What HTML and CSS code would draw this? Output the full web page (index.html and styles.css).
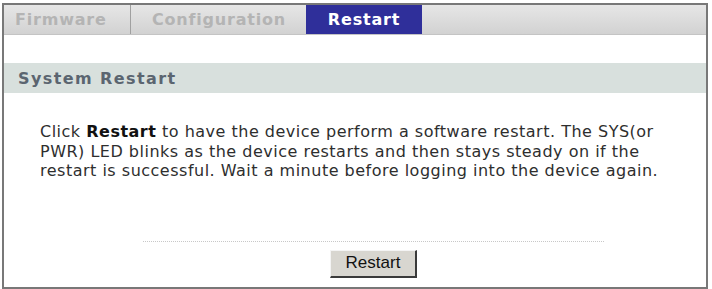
FILE: index.html
```html
<!DOCTYPE html>
<html>
<head>
<meta charset="utf-8">
<link rel="stylesheet" href="styles.css">
</head>
<body>
<div class="frame">
  <div class="tabs">
    <div class="tab tab-fw">Firmware</div>
    <div class="tab tab-cfg">Configuration</div>
    <div class="tab tab-active">Restart</div>
    <div class="tab-fill"></div>
  </div>
  <div class="title">System Restart</div>
  <p class="desc">Click <b>Restart</b> to have the device perform a software restart. The SYS(or PWR) LED blinks as the device restarts and then stays steady on if the restart is successful. Wait a minute before logging into the device again.</p>
  <div class="sep"></div>
  <div class="actions"><button class="btn">Restart</button></div>
</div>
</body>
</html>
```

FILE: styles.css
```css
html, body {
  margin: 0;
  padding: 0;
  background: #ffffff;
}
.frame {
  margin: 3px 0 0 2px;
  width: 702px;
  height: 282px;
  border: 2px solid #787878;
  background: #fff;
  display: flex;
  flex-direction: column;
  font-family: "DejaVu Sans", Verdana, sans-serif;
}
.tabs {
  display: flex;
  height: 29px;
  background: linear-gradient(#e6e6e6, #d2d2d2);
  border-bottom: 1px solid #c4c4c4;
}
.tab {
  display: flex;
  align-items: center;
  font-weight: bold;
  font-size: 16px;
  color: #b4b4b4;
  letter-spacing: 0.8px;
}
.tab-fw {
  width: 115px;
  padding-left: 11px;
  border-right: 1px solid #a0a0a0;
}
.tab-cfg {
  width: 154px;
  padding-left: 21px;
}
.tab-active {
  width: 116px;
  justify-content: center;
  background: #2f2f9a;
  color: #ffffff;
}
.tab-fill {
  flex: 1;
}
.title {
  margin-top: 28px;
  height: 30px;
  background: #d8e0dd;
  display: flex;
  align-items: center;
  padding-left: 14px;
  font-weight: bold;
  font-size: 16px;
  letter-spacing: 1.4px;
  color: #5b6570;
}
.desc {
  margin: 29px 20px 0 36px;
  font-size: 16px;
  letter-spacing: 0.5px;
  line-height: 19.5px;
  color: #2e2e2e;
}
.desc b {
  color: #111;
}
.sep {
  margin: 60px 0 0 139px;
  width: 461px;
  border-top: 1px dotted #c8c8c8;
}
.actions {
  display: flex;
  justify-content: flex-start;
  padding-left: 326px;
  margin-top: 8px;
}
.btn {
  width: 87px;
  height: 28px;
  background: #d8d6d0;
  border-style: solid;
  border-width: 1px 2px 2px 1px;
  border-color: #f4f4f4 #3a3a3a #3a3a3a #f4f4f4;
  font-family: "Liberation Sans", Arial, sans-serif;
  font-size: 17px;
  color: #111;
  padding: 0;
}
```
